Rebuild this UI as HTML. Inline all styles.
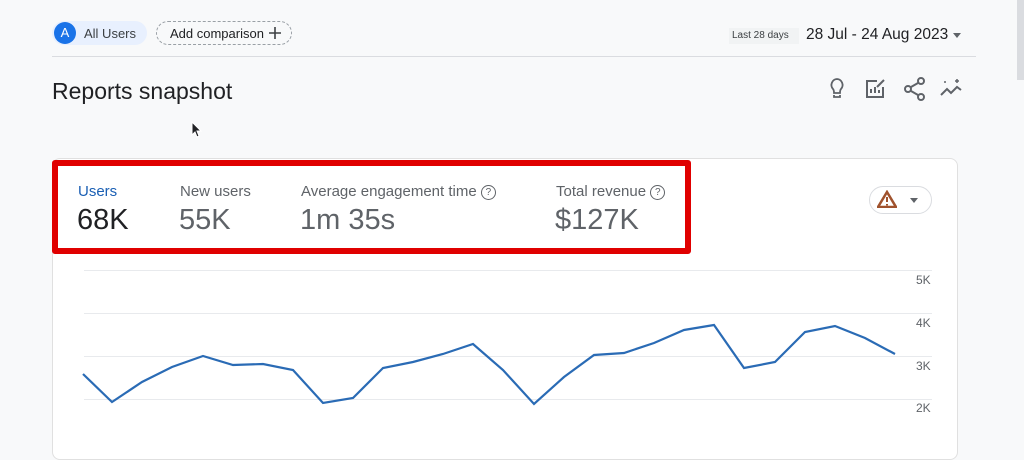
<!DOCTYPE html>
<html><head><style>
body{margin:0;width:1024px;height:438px;background:#f8f9fa;font-family:"Liberation Sans",sans-serif;position:relative;overflow:hidden;color:#202124}
.abs{position:absolute}
</style></head><body>
<div class="abs" style="left:1017px;top:0;width:7px;height:80px;background:#dadce0"></div>
<div class="abs" style="left:52px;top:21px;width:95px;height:24px;border-radius:12px;background:#e8f0fe"></div>
<div class="abs" style="left:54px;top:22px;width:22px;height:22px;border-radius:50%;background:#1a73e8;color:#fff;font-size:13px;text-align:center;line-height:22px">A</div>
<div class="abs" style="left:84px;top:26px;font-size:13px;color:#3c4043">All Users</div>
<div class="abs" style="left:156px;top:21px;width:134px;height:22px;border:1px dashed #9aa0a6;border-radius:12px"></div>
<div class="abs" style="left:170px;top:26px;font-size:13px;color:#202124">Add comparison</div>
<svg class="abs" style="left:268px;top:26px" width="14" height="14"><path d="M7 1v12M1 7h12" stroke="#3c4043" stroke-width="1.6"/></svg>
<div class="abs" style="left:729px;top:28px;width:70px;height:16px;background:#f1f3f4"></div>
<div class="abs" style="left:732px;top:30px;font-size:10px;color:#3c4043">Last 28 days</div>
<div class="abs" style="left:806px;top:26px;font-size:15.5px;color:#202124">28 Jul - 24 Aug 2023</div>
<div class="abs" style="left:953px;top:33px;width:0;height:0;border-left:4px solid transparent;border-right:4px solid transparent;border-top:5px solid #5f6368"></div>
<div class="abs" style="left:52px;top:56px;width:924px;height:1px;background:#dadce0"></div>
<div class="abs" style="left:52px;top:78px;font-size:23px;color:#202124">Reports snapshot</div>
<svg class="abs" style="left:825px;top:75px" width="150" height="28" fill="none" stroke="#5f6368" stroke-width="2">
<path d="M9 20v2h6v-2M12 4a6 6 0 0 0-4 10c1 1 1 2 1 4h6c0-2 0-3 1-4a6 6 0 0 0-4-10z" stroke-width="1.8"/>
<path d="M52 6h-10v16h16v-10" /><path d="M46 18v-4M50 18v-6M54 18v-3"/><path d="M52 12l7-7"/>
<circle cx="96" cy="6" r="3"/><circle cx="83" cy="14" r="3"/><circle cx="96" cy="22" r="3"/><path d="M86 12l7-4M86 16l7 4"/>
<path d="M116 20l6-6 4 4 6-6 4 3"/><path d="M132 4v4M130 6h4M120 6v2" stroke-width="1.5"/>
</svg>
<div class="abs" style="left:52px;top:158px;width:904px;height:300px;background:#fff;border:1px solid #e0e0e0;border-radius:8px"></div>
<div class="abs" style="left:52px;top:160px;width:627px;height:82px;border:6px solid #e00000;border-radius:3px"></div>
<div class="abs" style="left:78px;top:183px;font-size:15px;color:#1a5fb4">Users</div>
<div class="abs" style="left:77px;top:204px;font-size:29px;color:#202124">68K</div>
<div class="abs" style="left:180px;top:183px;font-size:15px;color:#5f6368">New users</div>
<div class="abs" style="left:179px;top:204px;font-size:29px;color:#5f6368">55K</div>
<div class="abs" style="left:301px;top:183px;font-size:15px;color:#5f6368">Average engagement time <span style="display:inline-block;width:13px;height:13px;border:1.5px solid #5f6368;border-radius:50%;font-size:10px;text-align:center;line-height:13px;vertical-align:1px">?</span></div>
<div class="abs" style="left:300px;top:204px;font-size:29px;color:#5f6368">1m 35s</div>
<div class="abs" style="left:556px;top:183px;font-size:15px;color:#5f6368">Total revenue <span style="display:inline-block;width:13px;height:13px;border:1.5px solid #5f6368;border-radius:50%;font-size:10px;text-align:center;line-height:13px;vertical-align:1px">?</span></div>
<div class="abs" style="left:555px;top:204px;font-size:29px;color:#5f6368">$127K</div>
<div class="abs" style="left:869px;top:186px;width:61px;height:26px;border:1px solid #dadce0;border-radius:14px"></div>
<svg class="abs" style="left:877px;top:190px" width="20" height="18"><path d="M10 2L19 17H1Z" fill="none" stroke="#a0522d" stroke-width="2.5"/><path d="M10 7v5M10 14v1.5" stroke="#a0522d" stroke-width="2"/></svg>
<div class="abs" style="left:910px;top:198px;width:0;height:0;border-left:4px solid transparent;border-right:4px solid transparent;border-top:5px solid #5f6368"></div>
<svg class="abs" style="left:0;top:0" width="1024" height="438">
<g stroke="#e8eaed" stroke-width="1"><path d="M84 270.5H932M84 313.5H932M84 356.5H932M84 399.5H932"/></g>
<g font-size="12" fill="#5f6368" font-family="Liberation Sans,sans-serif"><text x="916" y="284">5K</text><text x="916" y="327">4K</text><text x="916" y="370">3K</text><text x="916" y="412">2K</text></g>
<polyline fill="none" stroke="#2a6bb5" stroke-width="2.2" points="83,374 112,402 142,382 172,367 203,356 233,365 263,364 293,370 323,403 353,398 383,368 413,362 443,354 473,344 503,370 534,404 564,377 594,355 624,353 654,343 684,330 714,325 744,368 775,362 805,332 835,326 865,338 895,354"/>
</svg>
<svg class="abs" style="left:191px;top:121px" width="12" height="18"><path d="M1 1v13l3-3 2 5 2-1-2-5h4z" fill="#202124" stroke="#fff" stroke-width="1"/></svg>
</body></html>
